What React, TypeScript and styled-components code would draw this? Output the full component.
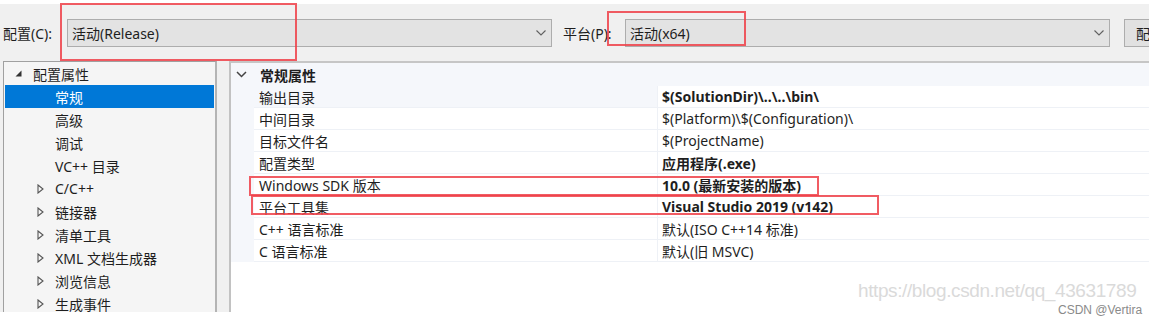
import React from "react";
import styled, { createGlobalStyle } from "styled-components";

const Global = createGlobalStyle`
  html, body {
    margin: 0;
    padding: 0;
    background: #ffffff;
  }
  body {
    font-family: "Noto Sans", "Noto Sans CJK SC", sans-serif;
    font-size: 14px;
    color: #1e1e1e;
  }
`;

const Page = styled.div`
  position: relative;
  width: 1157px;
  height: 324px;
  padding: 4px 8px 0 0;
  box-sizing: border-box;
  overflow: hidden;
`;

const Window = styled.div`
  width: 1149px;
  height: 308px;
  background: #f0f0f0;
  display: flex;
  flex-direction: column;
  overflow: hidden;
`;

const Toolbar = styled.div`
  height: 57px;
  display: flex;
  align-items: center;
  padding-left: 3px;
  white-space: nowrap;
`;

const Label = styled.div<{ $w: number; $gap?: number }>`
  width: ${(p) => p.$w}px;
  margin-left: ${(p) => p.$gap ?? 0}px;
  flex: none;
  font-size: 14px;
`;

const Combo = styled.div<{ $w: number }>`
  width: ${(p) => p.$w}px;
  height: 28px;
  flex: none;
  box-sizing: border-box;
  border: 1px solid #adadad;
  background: #e3e3e3;
  display: flex;
  align-items: center;
  padding: 0 5px 0 4px;
  justify-content: space-between;
`;

const Chevron = () => (
  <svg width="10" height="6" viewBox="0 0 10 6">
    <path d="M0.5 0.5 L5 5 L9.5 0.5" fill="none" stroke="#606060" strokeWidth="1.1" />
  </svg>
);

const SideButton = styled.div`
  margin-left: 14px;
  width: 40px;
  height: 28px;
  flex: none;
  box-sizing: border-box;
  border: 1px solid #adadad;
  background: #e1e1e1;
  padding-left: 11px;
  display: flex;
  align-items: center;
`;

const Body = styled.div`
  flex: 1;
  display: flex;
  align-items: flex-start;
  padding-left: 3px;
  gap: 12px;
`;

const Tree = styled.div`
  width: 214px;
  height: 251px;
  flex: none;
  box-sizing: border-box;
  border: 1px solid #a0a0a0;
  border-right: 2px solid #b4b4b4;
  border-bottom: none;
  background: #f5f5f5;
  padding: 0 1px;
  overflow: hidden;
`;

const TreeItem = styled.div<{ $depth: number; $selected?: boolean }>`
  height: 23px;
  display: flex;
  align-items: center;
  padding-left: ${(p) => (p.$depth === 0 ? 10 : 32)}px;
  background: ${(p) => (p.$selected ? "#0078d7" : "transparent")};
  color: ${(p) => (p.$selected ? "#ffffff" : "#1e1e1e")};
  white-space: nowrap;
`;

const Twisty = styled.span`
  width: 18px;
  flex: none;
  display: flex;
  align-items: center;
`;

const Grid = styled.div`
  flex: 1;
  height: 251px;
  box-sizing: border-box;
  border-top: 2px solid #c6c6c6;
  border-left: 2px solid #c2c2c2;
  background: #ffffff;
  overflow: hidden;
`;

const GridArea = styled.div`
  background: #f5f7fb;
`;

const Category = styled.div`
  height: 23px;
  display: flex;
  align-items: center;
  padding-left: 5px;
  font-weight: bold;
`;

const Row = styled.div`
  height: 22px;
  display: flex;
  padding-left: 23px;
`;

const NameCell = styled.div<{ $plain?: boolean }>`
  width: 404px;
  flex: none;
  box-sizing: border-box;
  display: flex;
  align-items: center;
  padding-left: 5px;
  background: ${(p) => (p.$plain ? "#f5f7fb" : "#ffffff")};
  border-bottom: 1px solid #eef1f6;
  border-right: 1px solid #eef1f6;
`;

const ValueCell = styled.div<{ $bold?: boolean }>`
  flex: 1;
  box-sizing: border-box;
  display: flex;
  align-items: center;
  padding-left: 4px;
  background: #ffffff;
  border-bottom: 1px solid #eef1f6;
  font-weight: ${(p) => (p.$bold ? "bold" : "normal")};
  white-space: nowrap;
`;

const Mark = styled.div`
  position: absolute;
  box-sizing: border-box;
  border: 2px solid rgba(238, 64, 72, 0.85);
  pointer-events: none;
`;

const Watermark = styled.div`
  position: absolute;
  left: 858px;
  top: 280px;
  font-family: "Liberation Sans", Arial, sans-serif;
  font-size: 19px;
  letter-spacing: -0.4px;
  color: #dadada;
  white-space: nowrap;
`;

const Credit = styled.div`
  position: absolute;
  left: 1058px;
  top: 303px;
  font-family: "Liberation Sans", Arial, sans-serif;
  font-size: 12px;
  color: #8a8a8a;
  white-space: nowrap;
`;

const Expanded = () => (
  <svg width="7" height="7" viewBox="0 0 7 7">
    <path d="M6.5 0.5 L6.5 6.5 L0.5 6.5 Z" fill="#333" />
  </svg>
);

const Collapsed = () => (
  <svg width="7" height="10" viewBox="0 0 7 10">
    <path d="M1 1 L6 5 L1 9 Z" fill="none" stroke="#555" strokeWidth="1.1" />
  </svg>
);

const treeItems: { text: string; depth: number; kids?: boolean; selected?: boolean }[] = [
  { text: "配置属性", depth: 0 },
  { text: "常规", depth: 1, selected: true },
  { text: "高级", depth: 1 },
  { text: "调试", depth: 1 },
  { text: "VC++ 目录", depth: 1 },
  { text: "C/C++", depth: 1, kids: true },
  { text: "链接器", depth: 1, kids: true },
  { text: "清单工具", depth: 1, kids: true },
  { text: "XML 文档生成器", depth: 1, kids: true },
  { text: "浏览信息", depth: 1, kids: true },
  { text: "生成事件", depth: 1, kids: true },
];

const props: { name: string; value: string; bold?: boolean }[] = [
  { name: "输出目录", value: "$(SolutionDir)\\..\\..\\bin\\", bold: true },
  { name: "中间目录", value: "$(Platform)\\$(Configuration)\\" },
  { name: "目标文件名", value: "$(ProjectName)" },
  { name: "配置类型", value: "应用程序(.exe)", bold: true },
  { name: "Windows SDK 版本", value: "10.0 (最新安装的版本)", bold: true },
  { name: "平台工具集", value: "Visual Studio 2019 (v142)", bold: true },
  { name: "C++ 语言标准", value: "默认(ISO C++14 标准)" },
  { name: "C 语言标准", value: "默认(旧 MSVC)" },
];

const marks = [
  { left: 60, top: 3, width: 237, height: 58 },
  { left: 607, top: 11, width: 139, height: 35 },
  { left: 249, top: 176, width: 570, height: 20 },
  { left: 251, top: 195, width: 628, height: 20 },
];

export default function App() {
  return (
    <Page>
      <Global />
      <Window>
        <Toolbar>
          <Label $w={64}>配置(C):</Label>
          <Combo $w={485}>
            <span>活动(Release)</span>
            <Chevron />
          </Combo>
          <Label $w={62} $gap={11}>
            平台(P):
          </Label>
          <Combo $w={485}>
            <span>活动(x64)</span>
            <Chevron />
          </Combo>
          <SideButton>配</SideButton>
        </Toolbar>
        <Body>
          <Tree>
            {treeItems.map((t) => (
              <TreeItem key={t.text} $depth={t.depth} $selected={t.selected}>
                <Twisty>{t.depth === 0 ? <Expanded /> : t.kids ? <Collapsed /> : null}</Twisty>
                {t.text}
              </TreeItem>
            ))}
          </Tree>
          <Grid>
            <GridArea>
              <Category>
                <svg width="11" height="7" viewBox="0 0 11 7" style={{ marginRight: 13 }}>
                  <path d="M1 1 L5.5 5.5 L10 1" fill="none" stroke="#444" strokeWidth="1.5" />
                </svg>
                常规属性
              </Category>
              {props.map((p, i) => (
                <Row key={p.name}>
                  <NameCell $plain={i === 0}>{p.name}</NameCell>
                  <ValueCell $bold={p.bold}>{p.value}</ValueCell>
                </Row>
              ))}
            </GridArea>
          </Grid>
        </Body>
      </Window>
      {marks.map((m, i) => (
        <Mark key={i} style={m} />
      ))}
      <Watermark>https://blog.csdn.net/qq_43631789</Watermark>
      <Credit>CSDN @Vertira</Credit>
    </Page>
  );
}
